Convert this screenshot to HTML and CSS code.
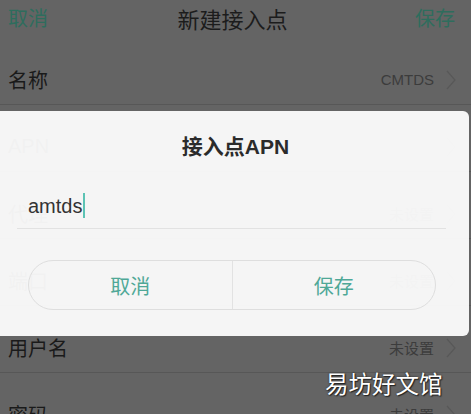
FILE: index.html
```html
<!DOCTYPE html>
<html lang="zh-CN">
<head>
<meta charset="utf-8">
<title>新建接入点</title>
<link rel="stylesheet" href="styles.css">
</head>
<body>
<div class="screen">
  <header class="nav">
    <span class="nav-btn">取消</span>
    <span class="nav-title">新建接入点</span>
    <span class="nav-btn">保存</span>
  </header>
  <div class="row">
    <span class="label">名称</span>
    <span class="value">CMTDS<svg class="chev" viewBox="0 0 10 20"><polyline points="1,1 9,10 1,19"/></svg></span>
  </div>
  <div class="row">
    <span class="label lat">APN</span>
    <span class="value"><svg class="chev" viewBox="0 0 10 20"><polyline points="1,1 9,10 1,19"/></svg></span>
  </div>
  <div class="row">
    <span class="label">代理</span>
    <span class="value">未设置<svg class="chev" viewBox="0 0 10 20"><polyline points="1,1 9,10 1,19"/></svg></span>
  </div>
  <div class="row">
    <span class="label">端口</span>
    <span class="value">未设置<svg class="chev" viewBox="0 0 10 20"><polyline points="1,1 9,10 1,19"/></svg></span>
  </div>
  <div class="row">
    <span class="label">用户名</span>
    <span class="value">未设置<svg class="chev" viewBox="0 0 10 20"><polyline points="1,1 9,10 1,19"/></svg></span>
  </div>
  <div class="row">
    <span class="label">密码</span>
    <span class="value">未设置<svg class="chev" viewBox="0 0 10 20"><polyline points="1,1 9,10 1,19"/></svg></span>
  </div>

  <div class="dialog">
    <div class="dlg-title">接入点APN</div>
    <div class="dlg-input"><span class="typed">amtds</span><span class="caret"></span></div>
    <div class="dlg-actions">
      <span class="dlg-btn">取消</span>
      <span class="dlg-btn">保存</span>
    </div>
  </div>

  <div class="watermark">易坊好文馆</div>
</div>
</body>
</html>
```

FILE: styles.css
```css
html, body {
  margin: 0;
  padding: 0;
}
body {
  width: 471px;
  height: 414px;
  overflow: hidden;
  background: #646464;
  font-family: "Liberation Sans", "Noto Sans CJK SC", sans-serif;
}
.screen {
  position: relative;
  width: 471px;
  height: 414px;
  overflow: hidden;
}
.nav {
  height: 38px;
  display: flex;
  align-items: center;
  justify-content: space-between;
  padding: 0 16px 2px 8px;
  box-sizing: border-box;
}
.nav-btn {
  font-family: "Noto Sans CJK SC", sans-serif;
  font-size: 20px;
  color: #2e6d5d;
  line-height: 22px;
}
.nav-title {
  font-family: "Noto Sans CJK SC", sans-serif;
  font-size: 22px;
  color: #1c1c1c;
  line-height: 22px;
  margin-left: 2px;
}
.row {
  height: 67px;
  box-sizing: border-box;
  padding: 17px 15px 0 8px;
  display: flex;
  align-items: center;
  justify-content: space-between;
  border-bottom: 1px solid #575757;
}
.label {
  font-family: "Noto Sans CJK SC", sans-serif;
  font-size: 20px;
  color: #1a1a1a;
}
.label.lat {
  font-family: "Liberation Sans", sans-serif;
}
.value {
  display: flex;
  align-items: center;
  gap: 12px;
  font-family: "Liberation Sans", "Noto Sans CJK SC", sans-serif;
  font-size: 15px;
  color: #3c3c3c;
}
.chev {
  width: 10px;
  height: 20px;
  fill: none;
  stroke: #585858;
  stroke-width: 1.2;
}
.dialog {
  position: absolute;
  left: 0;
  top: 111px;
  width: 469px;
  height: 225px;
  background: rgba(253, 253, 253, 0.95);
  border-radius: 0 6px 6px 0;
  display: flex;
  flex-direction: column;
}
.dlg-title {
  margin-top: 25px;
  height: 22px;
  line-height: 22px;
  text-align: center;
  font-family: "Liberation Sans", "Noto Sans CJK SC", sans-serif;
  font-weight: 600;
  font-size: 21px;
  color: #2b2b2b;
  padding-left: 2px;
}
.dlg-input {
  margin: 35px 23px 0 17px;
  height: 36px;
  box-sizing: border-box;
  padding: 0 0 10px 11px;
  border-bottom: 1px solid #e2e2e2;
  display: flex;
  align-items: center;
}
.typed {
  font-size: 20px;
  line-height: 26px;
  color: #333333;
}
.caret {
  width: 1.5px;
  height: 25px;
  background: #5cc3b4;
  margin-left: 1px;
}
.dlg-actions {
  margin: 31px 0 0 28px;
  width: 408px;
  height: 50px;
  box-sizing: border-box;
  border: 1px solid #dedede;
  border-radius: 25px;
  display: flex;
}
.dlg-btn {
  flex: 1;
  display: flex;
  align-items: center;
  justify-content: center;
  font-family: "Noto Sans CJK SC", sans-serif;
  font-size: 20px;
  color: #4fa897;
}
.dlg-btn + .dlg-btn {
  border-left: 1px solid #e2e2e2;
}
.watermark {
  position: absolute;
  left: 325px;
  top: 369px;
  font-family: "Noto Sans CJK SC", sans-serif;
  font-size: 23.5px;
  line-height: 28px;
  color: #ffffff;
  text-shadow: 0 0 2px #222, 1px 1px 1px #222;
}
```
